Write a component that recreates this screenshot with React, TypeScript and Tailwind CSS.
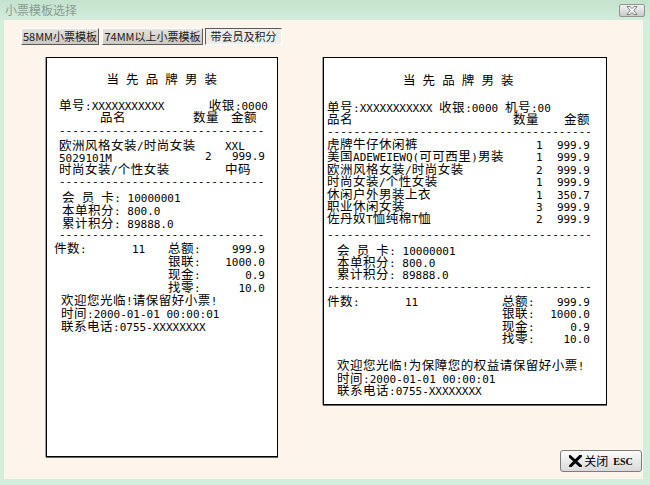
import React from 'react';

// splits a string into CJK and latin runs so the latin parts get the narrow mono face
const Txt = ({ s }: { s: string }) => (
  <>
    {s
      .split(/([\x00-\xff]+)/)
      .filter(Boolean)
      .map((p, i) =>
        /^[\x00-\xff]+$/.test(p) ? (
          <span key={i} className="font-['DejaVu_Sans_Mono',monospace] text-[11px] tracking-normal whitespace-pre">
            {p}
          </span>
        ) : (
          <span key={i}>{p}</span>
        )
      )}
  </>
);

const Dash = ({ cls = '' }: { cls?: string }) => (
  <div className={`h-[12px] leading-[12px] overflow-hidden whitespace-nowrap font-['DejaVu_Sans_Mono',monospace] text-[11px] tracking-normal ${cls}`}>
    {'-'.repeat(48)}
  </div>
);

function Tab({ label, active }: { label: string; active?: boolean }) {
  return (
    <div
      className={
        active
          ? 'h-[17px] flex items-center justify-center border border-t-[#5a5a5a] border-l-[#5a5a5a] border-b-white border-r-white bg-[#efedea] text-[11px] text-[#1a1a1a]'
          : 'h-[17px] flex items-center justify-center border border-t-white border-l-white border-b-[#5a5a5a] border-r-[#5a5a5a] bg-gradient-to-b from-[#e4e2de] to-[#ccc9c3] text-[11px] text-[#1a1a1a]'
      }
    >
      {label}
    </div>
  );
}

const receipt = 'bg-white border border-black shadow-[-1px_0_0_#a0a0a0,0_1px_0_#666] flex flex-col whitespace-nowrap text-[12.5px] tracking-[0.5px] text-black';

function ReceiptSmall() {
  return (
    <div className={`w-[232px] h-[400px] px-[12px] ${receipt}`}>
      <div className="mt-[14px] h-[14px] leading-[14px] text-center">
        <Txt s="当 先 品 牌 男 装" />
      </div>
      <div className="mt-[13px] h-[12px] leading-[12px] flex justify-between -mr-[3px]">
        <span><Txt s="单号:XXXXXXXXXXX" /></span>
        <span><Txt s="收银:0000" /></span>
      </div>
      <div className="h-[12px] leading-[12px] grid grid-cols-[134px_38px_1fr]">
        <span className="pl-[41px]">品名</span>
        <span>数量</span>
        <span>金额</span>
      </div>
      <Dash cls="mt-[2px]" />
      <div className="mt-[2px] h-[12px] leading-[12px] grid grid-cols-[166px_1fr]">
        <span><Txt s="欧洲风格女装/时尚女装" /></span>
        <span><Txt s="XXL" /></span>
      </div>
      <div className="h-[12px] leading-[12px] grid grid-cols-[146px_1fr]">
        <span><Txt s="5029101M" /></span>
        <span className="flex justify-between">
          <Txt s="2" />
          <Txt s="999.9" />
        </span>
      </div>
      <div className="h-[12px] leading-[12px] grid grid-cols-[166px_1fr]">
        <span><Txt s="时尚女装/个性女装" /></span>
        <span>中码</span>
      </div>
      <Dash cls="mt-[1px]" />
      <div className="mt-[2px] pl-[3px] flex flex-col">
        <div className="h-[13px] leading-[13px]"><Txt s="会 员 卡: 10000001" /></div>
        <div className="h-[13px] leading-[13px]"><Txt s="本单积分: 800.0" /></div>
        <div className="h-[13px] leading-[13px]"><Txt s="累计积分: 89888.0" /></div>
      </div>
      <Dash />
      <div className="flex flex-col">
        {[
          ['件数:', '11', '总额:', '999.9'],
          ['', '', '银联:', '1000.0'],
          ['', '', '现金:', '0.9'],
          ['', '', '找零:', '10.0'],
        ].map((r, i) => (
          <div key={i} className="h-[13px] leading-[13px] grid grid-cols-[73px_36px_40px_1fr]">
            <span className="-ml-[5px]"><Txt s={r[0]} /></span>
            <span><Txt s={r[1]} /></span>
            <span><Txt s={r[2]} /></span>
            <span className="text-right"><Txt s={r[3]} /></span>
          </div>
        ))}
      </div>
      <div className="pl-[2px] flex flex-col">
        <div className="h-[13px] leading-[13px]"><Txt s="欢迎您光临!请保留好小票!" /></div>
        <div className="h-[13px] leading-[13px]"><Txt s="时间:2000-01-01 00:00:01" /></div>
        <div className="h-[13px] leading-[13px]"><Txt s="联系电话:0755-XXXXXXXX" /></div>
      </div>
    </div>
  );
}

const items = [
  ['虎牌牛仔休闲裤', '1', '999.9'],
  ['美国ADEWEIEWQ(可可西里)男装', '1', '999.9'],
  ['欧洲风格女装/时尚女装', '2', '999.9'],
  ['时尚女装/个性女装', '1', '999.9'],
  ['休闲户外男装上衣', '1', '350.7'],
  ['职业休闲女装', '3', '999.9'],
  ['佐丹奴T恤纯棉T恤', '2', '999.9'],
];

function ReceiptWide() {
  return (
    <div className={`w-[284px] h-[348px] pl-[3px] pr-[16px] ${receipt}`}>
      <div className="mt-[15px] h-[14px] leading-[14px] text-center">
        <Txt s="当 先 品 牌 男 装" />
      </div>
      <div className="mt-[14px] h-[12px] leading-[12px]">
        <Txt s="单号:XXXXXXXXXXX 收银:0000 机号:00" />
      </div>
      <div className="h-[12px] leading-[12px] grid grid-cols-[186px_1fr_auto]">
        <span>品名</span>
        <span>数量</span>
        <span>金额</span>
      </div>
      <Dash cls="mt-[1px]" />
      <div className="flex flex-col">
        {items.map((r, i) => (
          <div key={i} className="h-[12.4px] leading-[12.4px] grid grid-cols-[209px_1fr_auto]">
            <span><Txt s={r[0]} /></span>
            <span><Txt s={r[1]} /></span>
            <span><Txt s={r[2]} /></span>
          </div>
        ))}
      </div>
      <Dash cls="mt-[4px]" />
      <div className="mt-[3px] pl-[10px] flex flex-col">
        <div className="h-[12px] leading-[12px]"><Txt s="会 员 卡: 10000001" /></div>
        <div className="h-[12px] leading-[12px]"><Txt s="本单积分: 800.0" /></div>
        <div className="h-[12px] leading-[12px]"><Txt s="累计积分: 89888.0" /></div>
      </div>
      <Dash cls="mt-[1px]" />
      <div className="mt-[2px] flex flex-col">
        {[
          ['件数:', '11', '总额:', '999.9'],
          ['', '', '银联:', '1000.0'],
          ['', '', '现金:', '0.9'],
          ['', '', '找零:', '10.0'],
        ].map((r, i) => (
          <div key={i} className="h-[12.4px] leading-[12.4px] grid grid-cols-[78px_97px_40px_1fr]">
            <span><Txt s={r[0]} /></span>
            <span><Txt s={r[1]} /></span>
            <span><Txt s={r[2]} /></span>
            <span className="text-right"><Txt s={r[3]} /></span>
          </div>
        ))}
      </div>
      <div className="mt-[15px] pl-[10px] flex flex-col">
        <div className="h-[12.5px] leading-[12.5px]"><Txt s="欢迎您光临!为保障您的权益请保留好小票!" /></div>
        <div className="h-[12.5px] leading-[12.5px]"><Txt s="时间:2000-01-01 00:00:01" /></div>
        <div className="h-[12.5px] leading-[12.5px]"><Txt s="联系电话:0755-XXXXXXXX" /></div>
      </div>
    </div>
  );
}

export default function App() {
  return (
    <div className="w-[650px] h-[485px] bg-[#d4eedd] flex flex-col overflow-hidden font-['Noto_Sans_CJK_SC',sans-serif] text-[#111]">
      {/* title bar */}
      <div className="h-[20px] shrink-0 flex items-center justify-between pl-[5px] pr-[5px] bg-gradient-to-b from-[#c4e3ce] to-[#d2ecdb]">
        <span className="text-[12px] leading-[12px] text-[#8a9b91]">小票模板选择</span>
        <div className="w-[26px] h-[13px] rounded-[2px] border border-[#8d9590] bg-gradient-to-b from-[#f2f2f2] to-[#c9cbca] flex items-center justify-center">
          <svg width="12" height="9" viewBox="0 0 12 9">
            <path d="M1 0.5h3l2 2.2 2-2.2h3L7.7 4.5 11 8.5H8L6 6.3 4 8.5H1l3.3-4z" fill="#fff" stroke="#707070" strokeWidth="0.9" strokeLinejoin="round" />
          </svg>
        </div>
      </div>

      {/* body */}
      <div className="flex-1 ml-[4px] mr-[7px] mb-[6px] bg-[#fdf5eb] flex flex-col pt-[8px]">
        <div className="pl-[17px] flex gap-[3px]">
          <div className="w-[78px]"><Tab label="58MM小票模板" /></div>
          <div className="w-[101px]"><Tab label="74MM以上小票模板" /></div>
          <div className="w-[77px] -ml-[1px]"><Tab label="带会员及积分" active /></div>
        </div>

        <div className="flex-1 mt-[12px] pl-[42px] pr-[1px] pb-[7px] flex gap-[45px]">
          <div className="self-start">
            <ReceiptSmall />
          </div>
          <div className="flex-1 flex flex-col">
            <ReceiptWide />
            <button className="mt-auto self-end w-[82px] h-[22px] rounded-[3px] border border-[#7c7c7c] bg-gradient-to-b from-[#fbfbfb] to-[#d9d9d9] flex items-center justify-center gap-[2px] text-[12px] text-black">
              <svg width="13" height="12" viewBox="0 0 13 12">
                <path d="M1 1.5 L11.5 11 M11.5 1 L1.5 11" stroke="#000" strokeWidth="3" strokeLinecap="round" />
              </svg>
              <span>关闭</span>
              <span className="ml-[3px] font-['Liberation_Serif',serif] font-bold text-[10px]">ESC</span>
            </button>
          </div>
        </div>
      </div>
    </div>
  );
}
